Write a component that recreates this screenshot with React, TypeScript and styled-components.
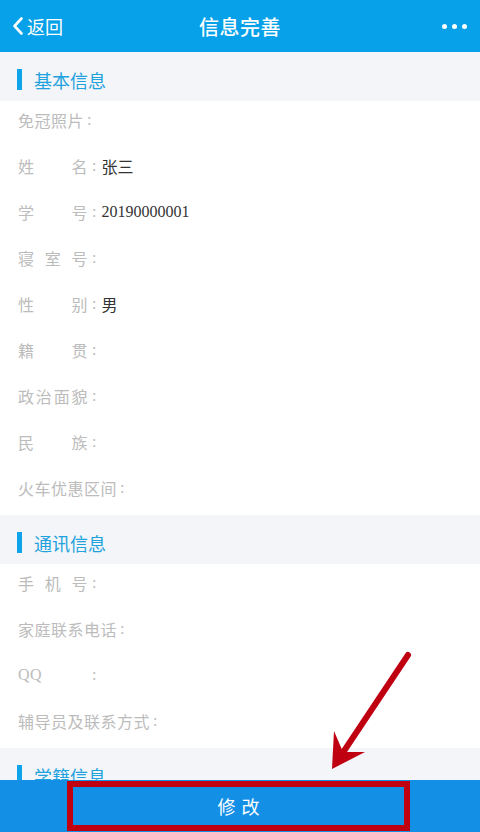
import * as React from "react";
import styled, { createGlobalStyle } from "styled-components";

const GlobalStyle = createGlobalStyle`
    html, body {
        margin: 0;
        padding: 0;
        overflow: hidden;
        background: #ffffff;
        font-family: "Liberation Serif", "Noto Sans CJK SC", serif;
    }
`;

const Page = styled.div`
    width: 480px;
    height: 832px;
    overflow: hidden;
    position: relative;
    background: #ffffff;
`;

const TopBar = styled.div`
    height: 52px;
    background: #06a1e8;
    display: grid;
    grid-template-columns: 1fr auto 1fr;
    align-items: center;
    color: #ffffff;
    font-family: "Noto Sans CJK SC", sans-serif;
`;

const Back = styled.div`
    display: flex;
    align-items: center;
    gap: 3px;
    padding-left: 12px;
    font-size: 18px;
`;

const Title = styled.div`
    font-size: 20px;
    font-weight: 500;
    letter-spacing: 0.5px;
`;

const More = styled.div`
    justify-self: end;
    display: flex;
    gap: 5px;
    padding-right: 13px;
`;

const Dot = styled.span`
    width: 5px;
    height: 5px;
    border-radius: 50%;
    background: #ffffff;
`;

const SectionHead = styled.div`
    height: 49px;
    box-sizing: border-box;
    padding-top: 6px;
    background: #f3f5f8;
    display: flex;
    align-items: center;
    gap: 12px;
    padding-left: 17px;
    font-family: "Noto Sans CJK SC", sans-serif;
    font-size: 18px;
    color: #1fa2de;
`;

const Accent = styled.span`
    width: 5px;
    height: 21px;
    background: #0fa3ec;
`;

const Row = styled.div`
    height: 46px;
    box-sizing: border-box;
    padding-bottom: 9px;
    display: flex;
    align-items: center;
    padding-left: 18px;
    font-size: 16px;
    color: #333333;
    white-space: nowrap;
`;

const Label = styled.span<{ $justify?: boolean }>`
    color: #bcbcbc;
    display: inline-block;
    width: ${(p) => (p.$justify ? "70px" : "auto")};
    text-align: ${(p) => (p.$justify ? "justify" : "left")};
    text-align-last: ${(p) => (p.$justify ? "justify" : "auto")};
    text-justify: inter-character;
    letter-spacing: 0.5px;
`;

const Colon = styled.span<{ $wide?: boolean }>`
    color: #bcbcbc;
    padding: ${(p) => (p.$wide ? "0 5px 0 4px" : "0 4px 0 3px")};
`;

const Value = styled.span`
    color: #333333;
`;

const BottomBar = styled.div`
    position: absolute;
    left: 0;
    right: 0;
    bottom: 0;
    height: 52px;
    background: #148fe6;
    display: flex;
    align-items: center;
    padding-left: 67px;
`;

const SubmitButton = styled.div`
    width: 343px;
    height: 50px;
    box-sizing: border-box;
    border: 6px solid #c00010;
    display: flex;
    align-items: center;
    justify-content: center;
    color: #ffffff;
    font-family: "Noto Sans CJK SC", sans-serif;
    font-size: 18px;
    letter-spacing: 6px;
    text-indent: 6px;
`;

const Arrow = styled.svg`
    position: absolute;
    left: 0;
    top: 0;
    pointer-events: none;
`;

type Field = { label: string; value?: string; justify?: boolean };

const basic: Field[] = [
    { label: "免冠照片" },
    { label: "姓名", value: "张三", justify: true },
    { label: "学号", value: "20190000001", justify: true },
    { label: "寝室号", justify: true },
    { label: "性别", value: "男", justify: true },
    { label: "籍贯", justify: true },
    { label: "政治面貌", justify: true },
    { label: "民族", justify: true },
    { label: "火车优惠区间" },
];

const contact: Field[] = [
    { label: "手机号", justify: true },
    { label: "家庭联系电话" },
    { label: "QQ", justify: true },
    { label: "辅导员及联系方式" },
];

const FieldRow: React.FC<{ field: Field }> = ({ field }) => (
    <Row>
        <Label $justify={field.justify}>{field.label}</Label>
        <Colon $wide={field.justify}>:</Colon>
        {field.value && <Value>{field.value}</Value>}
    </Row>
);

const Section: React.FC<{ title: string; fields: Field[] }> = ({ title, fields }) => (
    <>
        <SectionHead>
            <Accent />
            {title}
        </SectionHead>
        {fields.map((f) => (
            <FieldRow key={f.label} field={f} />
        ))}
    </>
);

export default function App() {
    return (
        <Page>
            <GlobalStyle />
            <TopBar>
                <Back>
                    <svg width="12" height="20" viewBox="0 0 12 20">
                        <path
                            d="M9.5 2.5 L2.5 10 L9.5 17.5"
                            fill="none"
                            stroke="#fff"
                            strokeWidth="2.6"
                            strokeLinecap="round"
                            strokeLinejoin="round"
                        />
                    </svg>
                    返回
                </Back>
                <Title>信息完善</Title>
                <More>
                    <Dot />
                    <Dot />
                    <Dot />
                </More>
            </TopBar>
            <Section title="基本信息" fields={basic} />
            <Section title="通讯信息" fields={contact} />
            <Section title="学籍信息" fields={[]} />
            <BottomBar>
                <SubmitButton>修改</SubmitButton>
            </BottomBar>
            <Arrow width="480" height="832" viewBox="0 0 480 832">
                <line
                    x1="408"
                    y1="655"
                    x2="342"
                    y2="754"
                    stroke="#bf0010"
                    strokeWidth="6"
                    strokeLinecap="round"
                />
                <path d="M332 769 L334 731 L343 752 L365 752 Z" fill="#bf0010" />
            </Arrow>
        </Page>
    );
}
